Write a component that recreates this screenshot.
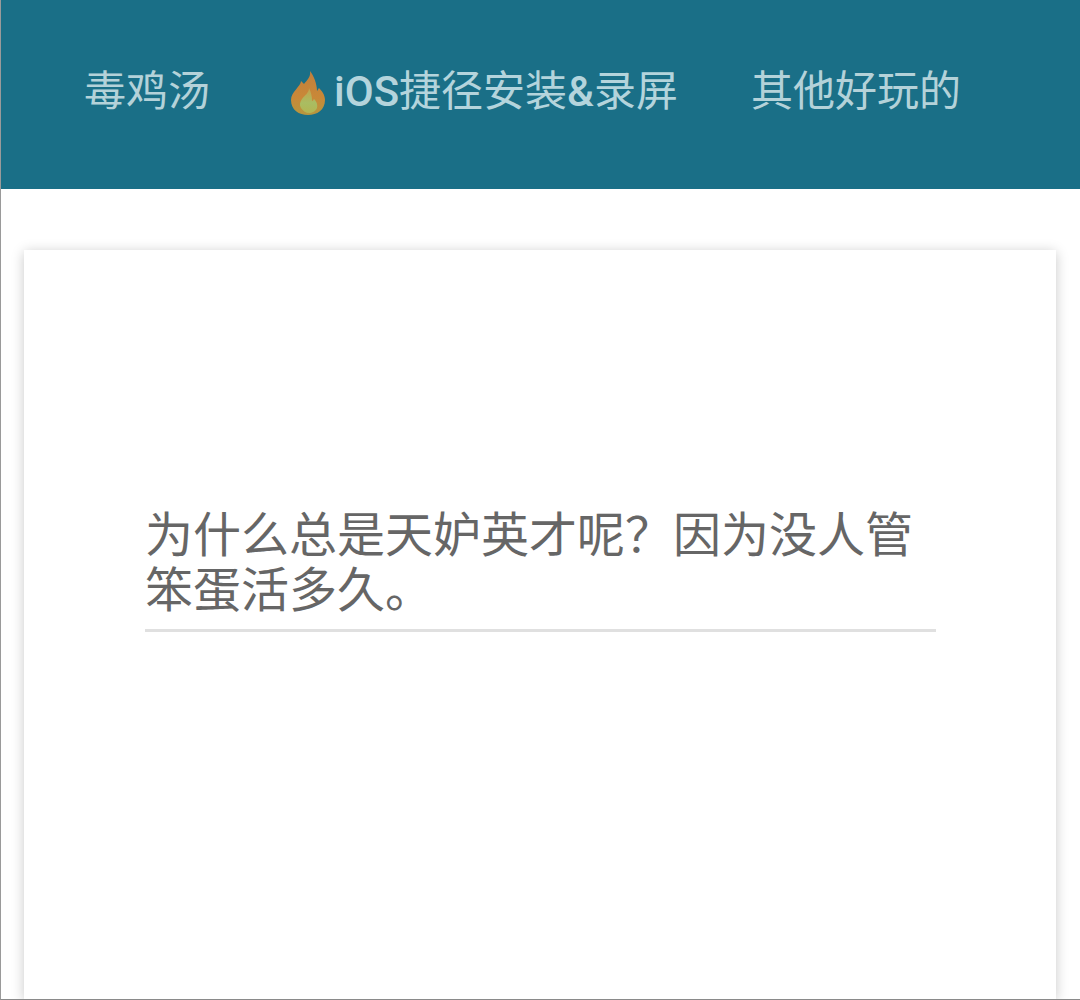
<script>
  const links = ['毒鸡汤', '其他好玩的'];
</script>

<div class="page">
  <header class="bar">
    <nav class="nav">
      <a class="link">{links[0]}</a>
      <a class="link hot">
        <svg class="flame" viewBox="0 0 36 46" aria-hidden="true">
          <defs>
            <linearGradient id="fl" x1="0" y1="0" x2="0" y2="1">
              <stop offset="0" stop-color="#c27f3c"/>
              <stop offset="0.6" stop-color="#c98838"/>
              <stop offset="1" stop-color="#b5973f"/>
            </linearGradient>
            <linearGradient id="fi" x1="0" y1="0" x2="0" y2="1">
              <stop offset="0" stop-color="#c4a04a"/>
              <stop offset="0.6" stop-color="#a9bd62"/>
              <stop offset="1" stop-color="#b3b552"/>
            </linearGradient>
          </defs>
          <path fill="url(#fl)" d="M20 1c1 6-3 9-6 13-1-1-2-2-3-3 0 5-10 11-10 19 0 10 8 15 17 15s17-5 17-15c0-5-3-9-6-12-1 1-1 2-2 3 0-7-3-15-7-20z"/>
          <path fill="url(#fi)" d="M19 18c0 5-4 7-7 11-2 3-3 6-1 9 2 3 5 5 8 5s7-2 8-5c1-4-1-7-3-9-1 1-1 2-2 2 0-5-1-9-3-13z"/>
        </svg>
        <span><b class="latin">iOS</b>捷径安装<b class="latin">&amp;</b>录屏</span>
      </a>
      <a class="link">{links[1]}</a>
    </nav>
  </header>

  <main class="main">
    <section class="card">
      <div class="quote">
        <h1 class="text">为什么总是天妒英才呢？因为没人管笨蛋活多久。</h1>
      </div>
    </section>
  </main>
</div>

<style>
  :global(body) {
    margin: 0;
    background: #fff;
    overflow: hidden;
  }

  .page {
    height: 1000px;
    box-sizing: border-box;
    border-left: 1px solid #9a9a9a;
    border-bottom: 1px solid #8a8a8a;
    display: flex;
    flex-direction: column;
    font-family: "Roboto", "Noto Sans CJK SC", sans-serif;
    overflow: hidden;
  }

  .bar {
    height: 189px;
    flex: none;
    background: #1a6f87;
    display: flex;
    align-items: center;
  }

  .nav {
    display: flex;
    align-items: center;
    gap: 74px;
    padding-left: 83px;
    margin-top: -6px;
  }

  .link {
    display: flex;
    align-items: center;
    font-size: 42px;
    line-height: 56px;
    color: #b4d2d9;
    white-space: nowrap;
  }

  .hot {
    margin-right: -1px;
    color: #b4d4dc;
  }

  .latin {
    font-weight: 500;
  }

  .flame {
    width: 36px;
    height: 46px;
    margin: 3px 8px 0 6px;
    flex: none;
    filter: blur(0.7px);
  }

  .main {
    flex: 1;
    min-height: 0;
    padding: 61px 24px 0 23px;
    display: flex;
  }

  .card {
    flex: 1;
    background: #fff;
    box-shadow: 0 2px 12px rgba(0, 0, 0, 0.22);
    display: flex;
    align-items: flex-start;
    padding: 0 120px 0 121px;
  }

  .quote {
    width: 100%;
    margin-top: 258px;
  }

  .text {
    margin: 0;
    padding-bottom: 11px;
    border-bottom: 3px solid #e0e0e0;
    font-size: 48px;
    font-weight: 400;
    line-height: 55px;
    color: #666;
  }
</style>
